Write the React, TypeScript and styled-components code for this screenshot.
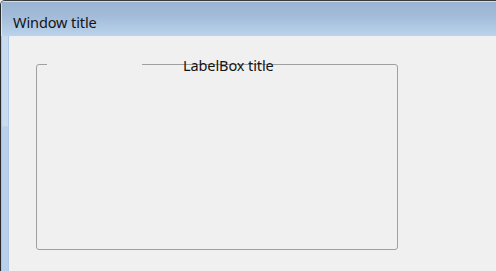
import React from 'react';
import styled, { createGlobalStyle } from 'styled-components';

const GlobalStyle = createGlobalStyle`
  html, body {
    margin: 0;
    padding: 0;
    background: #f0f0f0;
    overflow: hidden;
  }
  body {
    font-family: "Noto Sans", "Open Sans", "DejaVu Sans", sans-serif;
  }
`;

const App: React.FC = () => {
  return (
    <>
      <GlobalStyle />
      <Window>
        <TitleBar>
          <TitleText>Window title</TitleText>
        </TitleBar>
        <FrameBody>
          <SideFrame />
          <ClientArea>
            <GroupBox>
              <TopGap />
              <GroupLabel>LabelBox title</GroupLabel>
            </GroupBox>
          </ClientArea>
        </FrameBody>
      </Window>
    </>
  );
};

const Window = styled.div`
  display: flex;
  flex-direction: column;
  width: 100vw;
  height: 100vh;
  box-sizing: border-box;
  border-top: 1px solid #3a3a3a;
  border-left: 1px solid #2a2a2a;
  border-top-left-radius: 5px;
  background: #bcd4ee;
  overflow: hidden;
`;

const TitleBar = styled.div`
  display: flex;
  align-items: flex-start;
  height: 35px;
  box-sizing: border-box;
  flex-shrink: 0;
  padding: 11px 0 0 12px;
  background: linear-gradient(to bottom, #98b3d1 0%, #a3bcd9 45%, #bbd3ec 100%);
  box-shadow: inset 1px 1px 0 rgba(255, 255, 255, 0.55);
`;

const TitleText = styled.span`
  font-family: "Noto Sans", "Open Sans", sans-serif;
  font-size: 14.5px;
  line-height: 20px;
  color: #141414;
  letter-spacing: -0.1px;
`;

const FrameBody = styled.div`
  display: flex;
  flex: 1;
`;

const SideFrame = styled.div`
  width: 8px;
  flex-shrink: 0;
  background: linear-gradient(to bottom, #c7dbf1 0px, #c7dbf1 90px, #b8d0ea 91px, #b8d0ea 100%);
  box-shadow: inset 1px 0 0 #a9c3e0, inset -1px 0 0 #b0c9e4;
`;

const ClientArea = styled.div`
  flex: 1;
  background: #f0f0f0;
  padding: 28px 0 0 27px;
`;

const GroupBox = styled.div`
  position: relative;
  width: 362px;
  height: 186px;
  box-sizing: border-box;
  border: 1px solid #a0a0a0;
  border-radius: 3px;
`;

const TopGap = styled.div`
  position: absolute;
  top: -1px;
  left: 10px;
  width: 95px;
  height: 1px;
  background: #f0f0f0;
`;

const GroupLabel = styled.span`
  position: absolute;
  top: -10px;
  left: 146px;
  font-family: "Noto Sans", "Open Sans", sans-serif;
  font-size: 14.5px;
  line-height: 20px;
  color: #141414;
  letter-spacing: -0.1px;
  white-space: nowrap;
`;

export default App;
